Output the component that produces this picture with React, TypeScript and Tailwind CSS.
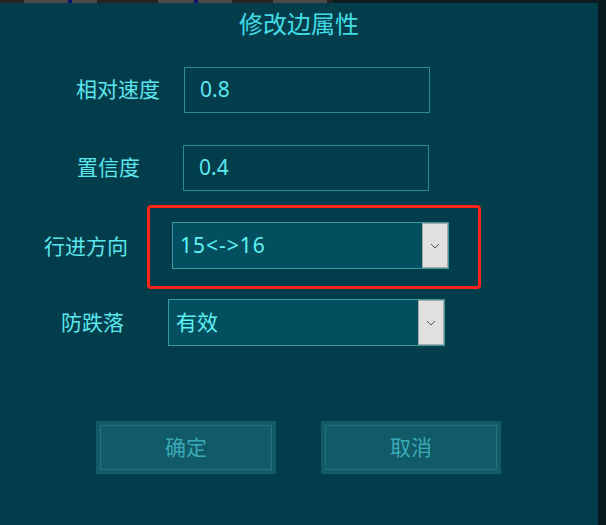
import React from "react";

const font = "font-['Noto_Sans','Noto_Sans_CJK_SC',sans-serif]";

function Chevron() {
  return (
    <svg width="10" height="6" viewBox="0 0 10 6" className="block">
      <path d="M1 1 L5 5 L9 1" fill="none" stroke="#555" strokeWidth="1" />
    </svg>
  );
}

function Field({ value }: { value: string }) {
  return (
    <div className="flex h-[46px] w-[246px] items-center border border-[#2a8a95] pl-[15px] text-[21px] text-[#5ae8f0]">
      {value}
    </div>
  );
}

function Combo({ value, spaced }: { value: string; spaced?: boolean }) {
  return (
    <div className="flex h-[47px] w-[277px] border border-[#3a98a3] bg-[#02505f]">
      <div className={`flex flex-1 items-center pl-[7px] text-[21px] text-[#5ff0f2] ${spaced ? "tracking-[1px]" : ""}`}>{value}</div>
      <div className="grid w-[26px] place-items-center border border-[#a8a8a8] bg-[#e1e1e1]">
        <Chevron />
      </div>
    </div>
  );
}

function Btn({ label }: { label: string }) {
  return (
    <div className="h-[53px] w-[180px] bg-[#115a67] p-[4px]">
      <div className="flex h-full items-center justify-center border border-[#25727e] text-[21px] text-[#3aa9b5]">
        {label}
      </div>
    </div>
  );
}

export default function App() {
  return (
    <div className={`flex h-[525px] w-[606px] flex-col bg-[#08191e] ${font}`}>
      <div className="flex h-[3px] shrink-0">
        <div className="w-[24px] bg-[#242424]" />
        <div className="w-[44px] bg-[#4a4a4a]" />
        <div className="w-[4px] bg-[#101070]" />
        <div className="w-[25px] bg-[#4a4a4a]" />
        <div className="w-[61px] bg-[#242424]" />
        <div className="w-[36px] bg-[#4a4a4a]" />
        <div className="w-[4px] bg-[#101070]" />
        <div className="w-[34px] bg-[#4a4a4a]" />
        <div className="w-[41px] bg-[#242424]" />
        <div className="w-[54px] bg-[#4a4a4a]" />
        <div className="w-[6px] bg-[#242424]" />
        <div className="flex-1 bg-[#0a1b20]" />
      </div>
      <div className="flex flex-1">
        <div className="flex w-[598px] flex-col bg-[#023d4b]">
          <div className="pt-[5px] text-center text-[24px] leading-[31px] text-[#40dde6]">修改边属性</div>

          <div className="mt-[28px] flex items-center pl-[76px]">
            <span className="w-[108px] text-[21px] text-[#5ce6ee]">相对速度</span>
            <Field value="0.8" />
          </div>

          <div className="mt-[32px] flex items-center pl-[77px]">
            <span className="w-[106px] text-[21px] text-[#5ce6ee]">置信度</span>
            <Field value="0.4" />
          </div>

          <div className="mt-[14px] flex items-center pl-[44px]">
            <span className="w-[103px] text-[21px] text-[#5ce6ee]">行进方向</span>
            <div className="h-[84px] w-[334px] rounded-[4px] border-[3px] border-[#ff2418] pl-[22px] pt-[14px]">
              <Combo value="15<->16" spaced />
            </div>
          </div>

          <div className="mt-[10px] flex items-center pl-[61px]">
            <span className="w-[107px] text-[21px] text-[#5ce6ee]">防跌落</span>
            <Combo value="有效" />
          </div>

          <div className="mt-[75px] flex gap-[45px] pl-[96px]">
            <Btn label="确定" />
            <Btn label="取消" />
          </div>
        </div>
        <div className="flex-1 bg-[#061a1f]" />
      </div>
    </div>
  );
}
